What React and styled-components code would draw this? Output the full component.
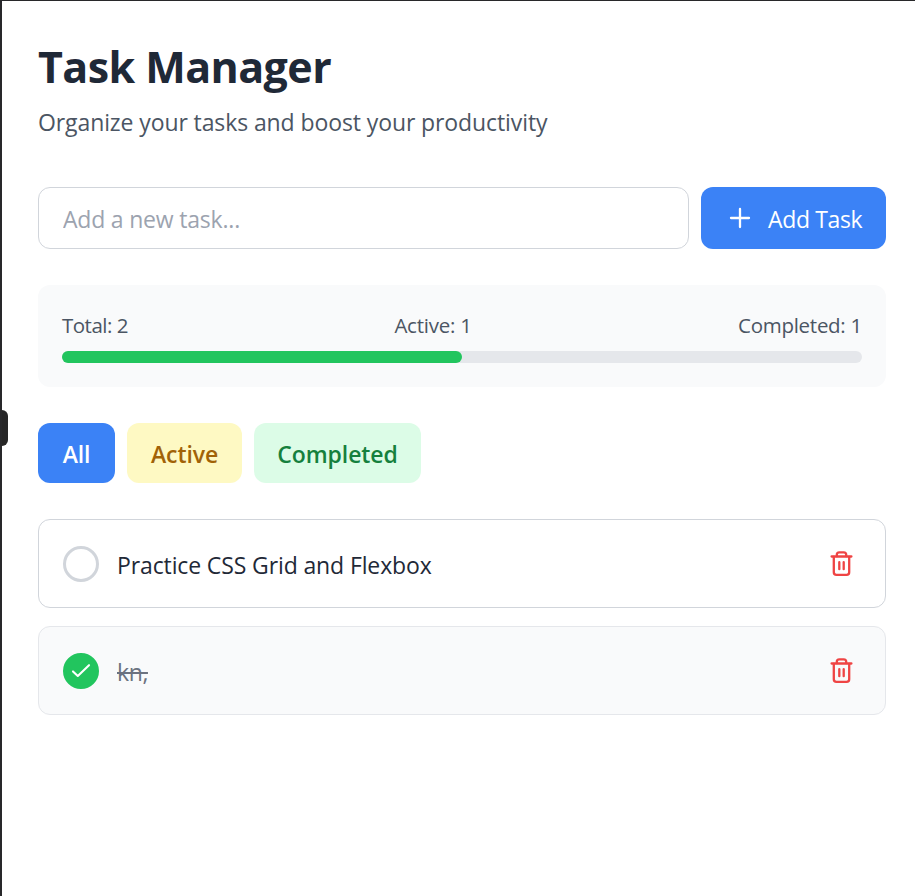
import React, { useState } from "react";
import styled, { createGlobalStyle, css } from "styled-components";

const GlobalStyle = createGlobalStyle`
  *, *::before, *::after { box-sizing: border-box; }
  body { margin: 0; background: #fff; }
  button, input { font: inherit; letter-spacing: inherit; }
`;

const Page = styled.div`
  position: relative;
  height: 896px;
  padding: 36px 29px 0 36px;
  border-top: 1px solid #28282a;
  border-left: 2px solid #28282a;
  background: #fff;
  color: #1f2937;
  font-family: "Open Sans", "Noto Sans", sans-serif;
  font-size: 23px;
  letter-spacing: -0.1px;
  line-height: 36px;
  overflow: hidden;
`;

const PanelHandle = styled.div`
  position: absolute;
  left: -2px;
  top: 409px;
  width: 8px;
  height: 36px;
  border-radius: 0 6px 6px 0;
  background: #262626;
`;

const Title = styled.h1`
  margin: 0 0 7px;
  font-size: 43px;
  font-weight: 700;
  letter-spacing: -0.58px;
  line-height: 60px;
`;

const Subtitle = styled.p`
  margin: 0 0 47px;
  color: #4b5563;
`;

const TaskForm = styled.form`
  display: flex;
  gap: 12px;
  height: 62px;
  margin-bottom: 36px;
`;

const TaskInput = styled.input`
  flex: 1;
  min-width: 0;
  padding: 1px 24px 0;
  border: 1px solid #d1d5db;
  border-radius: 12px;
  outline: none;
  color: #1f2937;
  letter-spacing: -0.2px;
  &::placeholder { color: #9ca3af; opacity: 1; }
`;

const AddButton = styled.button`
  display: flex;
  align-items: center;
  gap: 12px;
  width: 185px;
  padding: 0 24px;
  border: 0;
  border-radius: 12px;
  background: #3b82f6;
  color: #fff;
  letter-spacing: -0.35px;
  white-space: nowrap;
  svg { flex: none; }
  span { padding: 1px 0 0 1px; }
`;

const Stats = styled.section`
  height: 102px;
  margin-bottom: 36px;
  padding: 24px;
  border-radius: 12px;
  background: #f9fafb;
`;

const StatsRow = styled.div`
  display: flex;
  justify-content: space-between;
  height: 30px;
  margin-bottom: 12px;
  color: #4b5563;
  font-size: 20.5px;
  letter-spacing: -0.28px;
  line-height: 33px;
`;

const Stat = styled.span`
  letter-spacing: ${(p) => p.$spacing};
`;

const Track = styled.div`
  height: 12px;
  border-radius: 6px;
  background: #e5e7eb;
`;

const Fill = styled.div`
  height: 100%;
  border-radius: 6px;
  background: #22c55e;
`;

const Filters = styled.nav`
  display: flex;
  gap: 12px;
  margin-bottom: 36px;
`;

const tones = {
  blue: css`width: 77px; background: #3b82f6; color: #fff;`,
  yellow: css`width: 115px; background: #fef9c3; color: #a16207;`,
  green: css`width: 167px; background: #dcfce7; color: #15803d;`,
};

const FilterButton = styled.button`
  height: 60px;
  padding: 2px 0 0;
  border: 0;
  border-radius: 12px;
  font-weight: 600;
  ${(p) => tones[p.$tone]}
`;

const TaskList = styled.ul`
  display: flex;
  flex-direction: column;
  gap: 18px;
  margin: 0;
  padding: 0;
  list-style: none;
`;

const TaskRow = styled.li`
  display: flex;
  align-items: center;
  gap: 18px;
  height: 89px;
  padding: 0 30px 0 24px;
  border: 1px solid ${(p) => (p.$done ? "#e5e7eb" : "#d1d5db")};
  border-radius: 12px;
  background: ${(p) => (p.$done ? "#f9fafb" : "#fff")};
`;

const Checkbox = styled.button`
  display: flex;
  align-items: center;
  justify-content: center;
  width: 36px;
  height: 36px;
  padding: 0;
  border: 3px solid ${(p) => (p.$done ? "#22c55e" : "#d1d5db")};
  border-radius: 50%;
  background: ${(p) => (p.$done ? "#22c55e" : "transparent")};
  color: #fff;
`;

const TaskText = styled.span`
  flex: 1;
  padding-top: 2px;
  color: ${(p) => (p.$done ? "#6b7280" : "#1f2937")};
`;

const TaskLabel = styled.span`
  text-decoration: ${(p) => (p.$done ? "line-through" : "none")};
  letter-spacing: ${(p) => (p.$done ? "-0.4px" : "-0.12px")};
`;

const DeleteButton = styled.button`
  display: flex;
  padding: 0;
  border: 0;
  background: none;
  color: #ef4444;
`;

const StrokeIcon = styled.svg`
  fill: none;
  stroke: currentColor;
  stroke-width: ${(p) => p.$weight};
  stroke-linecap: round;
  stroke-linejoin: round;
`;

const PlusIcon = () => (
  <StrokeIcon $weight={2.3} width="30" height="30" viewBox="0 0 30 30">
    <path d="M15 6v18M6 15h18" />
  </StrokeIcon>
);

const CheckIcon = () => (
  <StrokeIcon $weight={2.1} width="24" height="24" viewBox="0 0 24 24">
    <path d="M4 12.4 8.8 17 20 6.2" />
  </StrokeIcon>
);

const TrashIcon = () => (
  <StrokeIcon $weight={2.3} width="27" height="27" viewBox="0 0 27 27">
    <path d="M3.6 6.5h19.8" />
    <path d="M8.8 6.2V4.8a2.5 2.5 0 0 1 2.5-2.5h4.4a2.5 2.5 0 0 1 2.5 2.5v1.4" />
    <path d="M5.8 6.8v15.4a2.6 2.6 0 0 0 2.6 2.6h10.2a2.6 2.6 0 0 0 2.6-2.6V6.8" />
    <path d="M11.3 12.2v7M15.7 12.2v7" />
  </StrokeIcon>
);

const filters = [
  { label: "All", tone: "blue" },
  { label: "Active", tone: "yellow" },
  { label: "Completed", tone: "green" },
];

const tasks = [
  { text: "Practice CSS Grid and Flexbox", done: false },
  { text: "kn,", done: true },
];

export default function App() {
  const [draft, setDraft] = useState("");
  const done = tasks.filter((t) => t.done).length;
  return (
    <>
      <GlobalStyle />
      <Page>
        <PanelHandle />
        <Title>Task Manager</Title>
        <Subtitle>Organize your tasks and boost your productivity</Subtitle>
        <TaskForm onSubmit={(e) => e.preventDefault()}>
          <TaskInput
            value={draft}
            onChange={(e) => setDraft(e.target.value)}
            placeholder="Add a new task..."
          />
          <AddButton><PlusIcon /><span>Add Task</span></AddButton>
        </TaskForm>
        <Stats>
          <StatsRow>
            <Stat $spacing="-0.5px">Total: {tasks.length}</Stat>
            <Stat $spacing="-0.25px">Active: {tasks.length - done}</Stat>
            <Stat $spacing="-0.28px">Completed: {done}</Stat>
          </StatsRow>
          <Track><Fill style={{ width: `${(done / tasks.length) * 100}%` }} /></Track>
        </Stats>
        <Filters>
          {filters.map((f) => <FilterButton key={f.label} $tone={f.tone}>{f.label}</FilterButton>)}
        </Filters>
        <TaskList>
          {tasks.map((t) => (
            <TaskRow key={t.text} $done={t.done}>
              <Checkbox $done={t.done} aria-label="Toggle task">{t.done && <CheckIcon />}</Checkbox>
              <TaskText $done={t.done}><TaskLabel $done={t.done}>{t.text}</TaskLabel></TaskText>
              <DeleteButton aria-label="Delete task"><TrashIcon /></DeleteButton>
            </TaskRow>
          ))}
        </TaskList>
      </Page>
    </>
  );
}
